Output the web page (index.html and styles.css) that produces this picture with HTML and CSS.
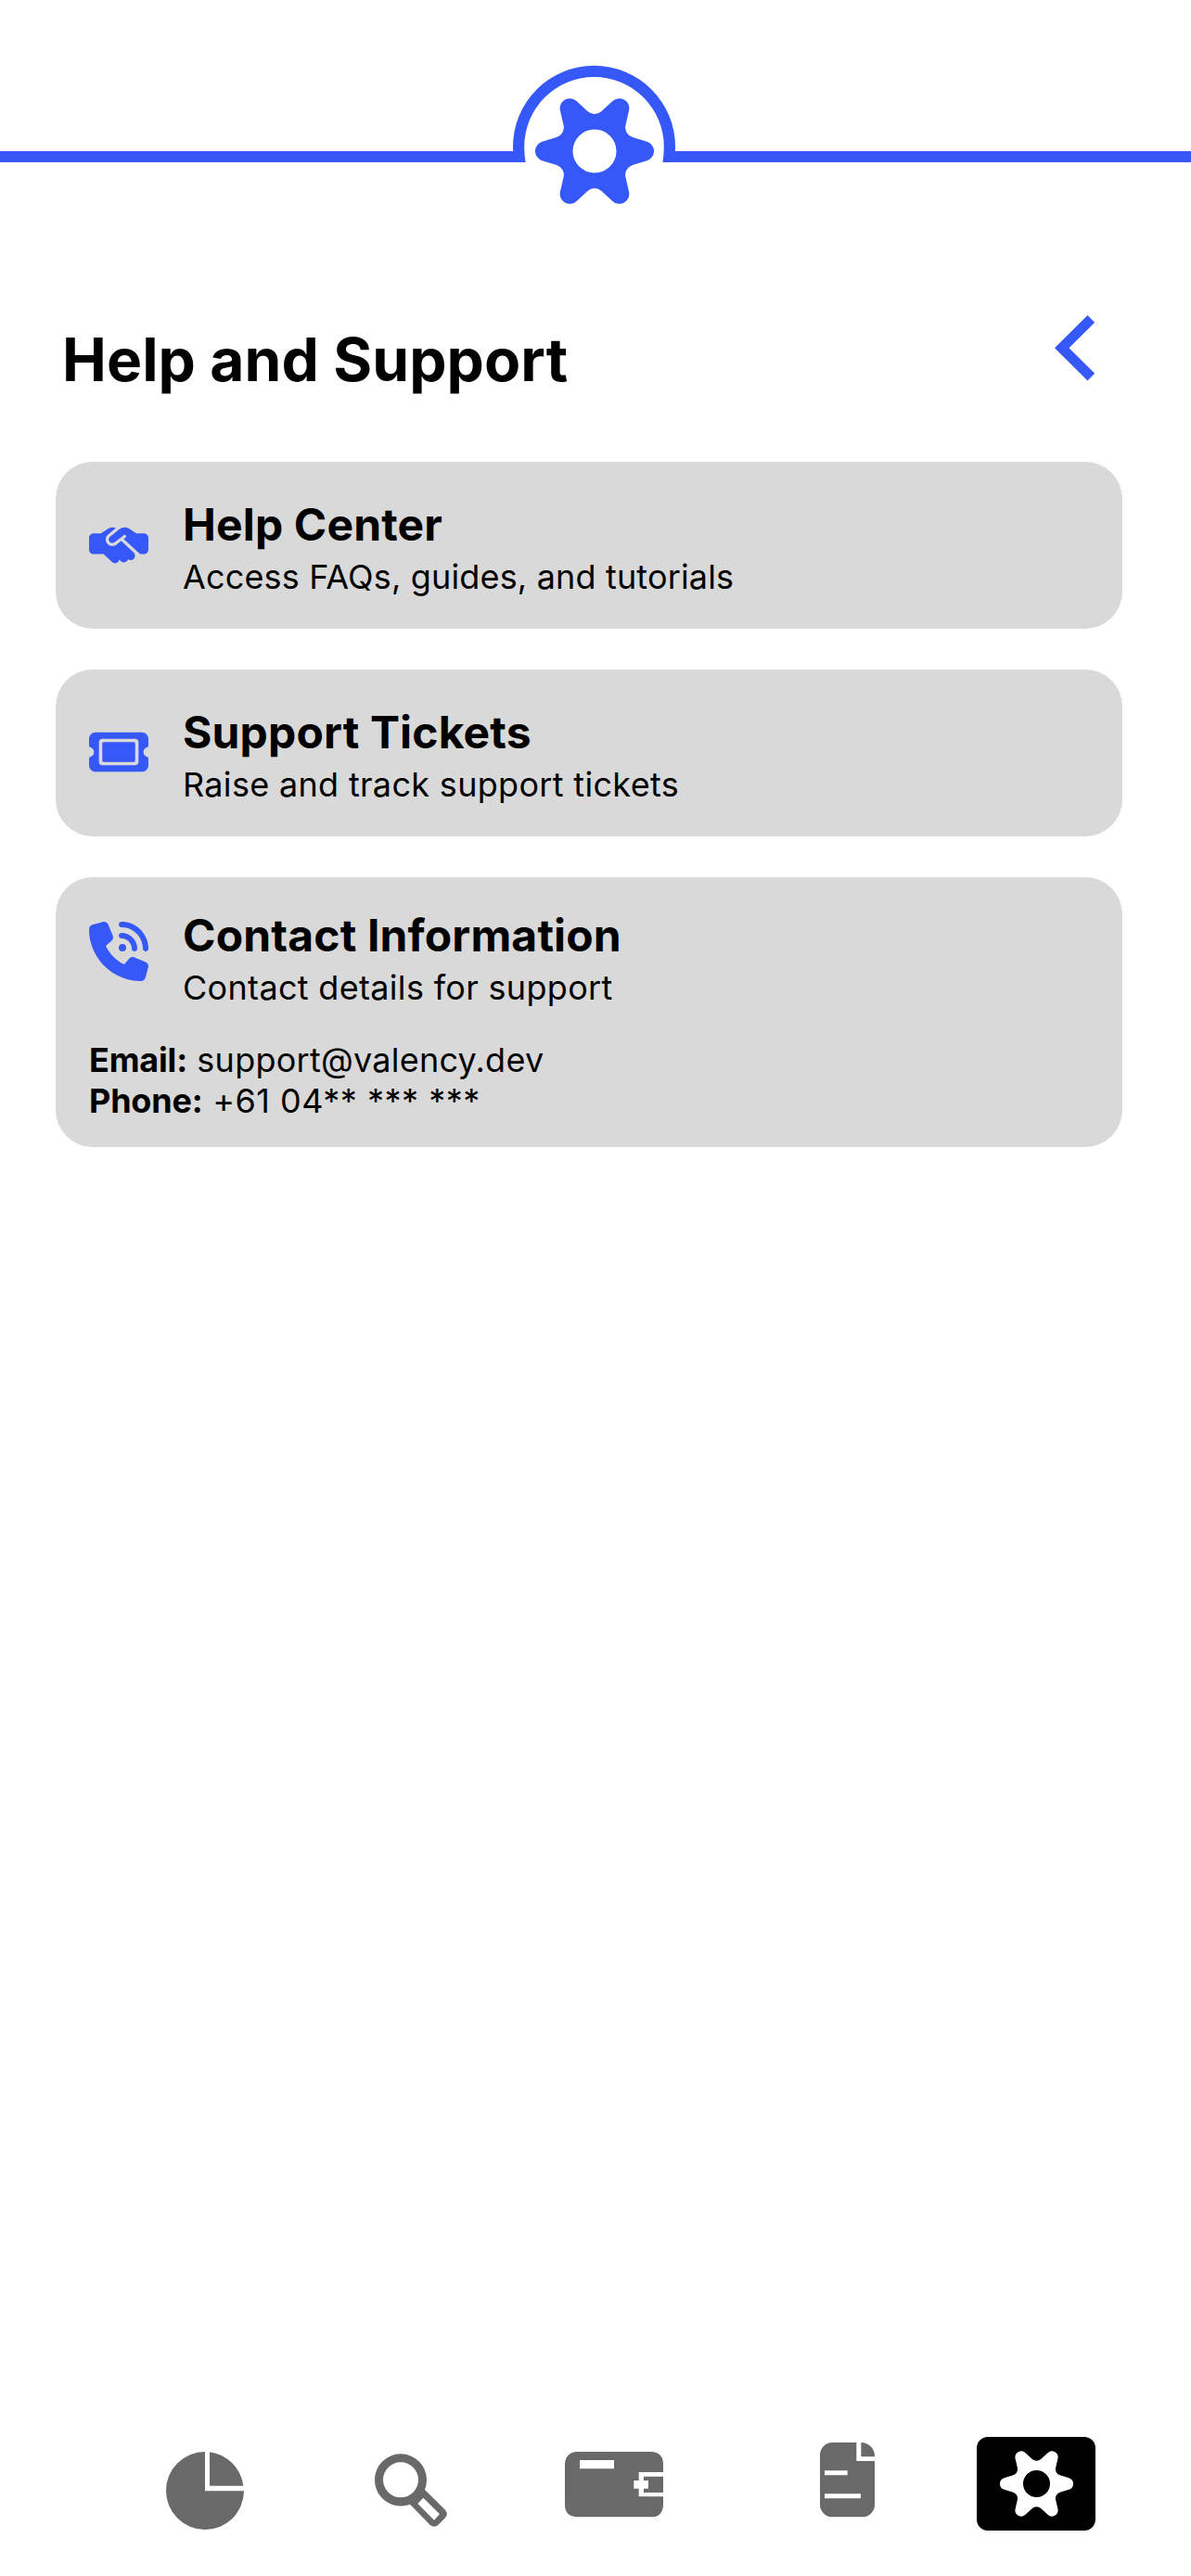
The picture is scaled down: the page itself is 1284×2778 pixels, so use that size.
FILE: index.html
```html
<!DOCTYPE html>
<html lang="en">
<head>
<meta charset="utf-8">
<title>Help and Support</title>
<link rel="stylesheet" href="styles.css">
</head>
<body>
<svg class="defs" width="0" height="0" aria-hidden="true">
  <symbol id="gear" viewBox="-192 -192 384 384">
    <path fill-rule="evenodd" d="M22.5-128.8L58.2-162A32 32 0 0 1 111.2-131.4L100.3-83.9A33 33 0 0 0 122.8-44.9L169.4-30.6A32 32 0 0 1 169.4 30.6L122.8 44.9A33 33 0 0 0 100.3 83.9L111.2 131.4A32 32 0 0 1 58.2 162L22.5 128.8A33 33 0 0 0-22.5 128.8L-58.2 162A32 32 0 0 1-111.2 131.4L-100.3 83.9A33 33 0 0 0-122.8 44.9L-169.4 30.6A32 32 0 0 1-169.4-30.6L-122.8-44.9A33 33 0 0 0-100.3-83.9L-111.2-131.4A32 32 0 0 1-58.2-162L-22.5-128.8A33 33 0 0 0 22.5-128.8ZM70.5 0A70.5 70.5 0 1 0-70.5 0A70.5 70.5 0 1 0 70.5 0Z"/>
  </symbol>
</svg>
<div class="screen">
  <header class="topbar">
    <svg width="1284" height="240" viewBox="0 0 1284 240" aria-hidden="true">
      <clipPath id="arch"><rect width="1284" height="175"/></clipPath>
      <g clip-path="url(#arch)">
        <path fill="#3758f9" d="M0 163H1284V175H0Z"/>
        <circle cx="640.5" cy="158.3" r="87.5" fill="#3758f9"/>
        <path fill="#fff" d="M565.2 158.3a75.3 75.3 0 0 1 150.6 0q0 8.700-1.4 16.700H566.600q-1.400-8-1.400-16.700Z"/>
      </g>
      <use href="#gear" x="577" y="99" width="128" height="128" fill="#3758f9"/>
    </svg>
  </header>

  <main class="content">
    <div class="heading">
      <h1 class="title">Help and Support</h1>
      <a class="back" aria-label="Back"><svg width="44" height="71" viewBox="0 0 44 71"><path d="M35.500 0L43.200 7.700L15.500 35.200L43.200 62.700L35.500 70.400L0 35.200Z"/></svg></a>
    </div>

    <section class="card">
      <div class="card-head">
        <svg class="icon" viewBox="0 0 640 512"><path d="M323.400 85.200l-96.800 78.400c-16.100 13-19.200 36.400-7 53.100c12.900 17.800 38 21.300 55.300 7.800l99.300-77.200c7-5.400 17-4.200 22.500 2.800s4.200 17-2.800 22.500l-20.900 16.200L550.200 352H592c26.500 0 48-21.500 48-48V176c0-26.500-21.500-48-48-48H516h-4-.7l-3.900-2.500L434.800 79c-15.300-9.800-33.200-15-51.400-15c-21.800 0-43 7.500-60 21.200zm22.800 124.400l-51.700 40.200C263 274.300 217.300 268 193.700 235.600c-22.200-30.500-16.600-73.100 12.700-96.800l83.200-67.300c-11.600-4.900-24.100-7.400-36.800-7.400C234 64 215.700 69.600 200 80l-72 48H48c-26.500 0-48 21.500-48 48V304c0 26.500 21.500 48 48 48H156.200l91.400 83.400c19.600 17.900 49.900 16.500 67.800-3.100c5.500-6.100 9.200-13.200 11.100-20.600l17 15.600c19.500 17.900 49.900 16.600 67.800-2.900c4.500-4.900 7.800-10.600 9.900-16.500c19.400 13 45.800 10.300 62.100-7.500c17.900-19.500 16.600-49.900-2.900-67.800l-134.200-123z"/></svg>
        <div class="card-text">
          <h2 class="card-title">Help Center</h2>
          <p class="line line-faq">Access FAQs, guides, and tutorials</p>
        </div>
      </div>
    </section>

    <section class="card">
      <div class="card-head">
        <svg class="icon icon-ticket" viewBox="0 0 576 512"><path d="M64 64C28.700 64 0 92.700 0 128v64c0 8.800 7.400 15.700 15.700 18.600C34.500 217.100 48 235 48 256s-13.500 38.900-32.300 45.400C7.400 304.300 0 311.200 0 320v64c0 35.300 28.700 64 64 64H512c35.300 0 64-28.700 64-64V320c0-8.800-7.400-15.700-15.700-18.600C541.500 294.900 528 277 528 256s13.500-38.900 32.300-45.400c8.300-2.900 15.700-9.800 15.700-18.600V128c0-35.300-28.700-64-64-64H64zm64 112l0 160c0 8.800 7.200 16 16 16H432c8.800 0 16-7.200 16-16V176c0-8.800-7.200-16-16-16H144c-8.800 0-16 7.200-16 16zM96 160c0-17.700 14.300-32 32-32H448c17.700 0 32 14.300 32 32V352c0 17.700-14.300 32-32 32H128c-17.700 0-32-14.300-32-32V160z"/></svg>
        <div class="card-text">
          <h2 class="card-title">Support Tickets</h2>
          <p class="line line-wide">Raise and track support tickets</p>
        </div>
      </div>
    </section>

    <section class="card card-contact">
      <div class="card-head">
        <svg class="icon" viewBox="0 0 512 512"><path d="M280 0C408.100 0 512 103.900 512 232c0 13.300-10.700 24-24 24s-24-10.700-24-24c0-101.600-82.400-184-184-184c-13.300 0-24-10.700-24-24s10.700-24 24-24zm8 192a32 32 0 1 1 0 64 32 32 0 1 1 0-64zm-32-72c0-13.300 10.700-24 24-24c75.100 0 136 60.900 136 136c0 13.300-10.700 24-24 24s-24-10.700-24-24c0-48.600-39.400-88-88-88c-13.300 0-24-10.700-24-24zM117.500 1.400c19.400-5.300 39.700 4.600 47.400 23.200l40 96c6.800 16.300 2.100 35.200-11.600 46.300L144 207.300c33.300 70.400 90.300 127.400 160.700 160.700L345 318.700c11.200-13.700 30-18.400 46.300-11.600l96 40c18.600 7.700 28.500 28 23.200 47.400l-24 88C481.800 499.900 466 512 448 512C200.600 512 0 311.400 0 64C0 46 12.100 30.200 29.500 25.400l88-24z"/></svg>
        <div class="card-text">
          <h2 class="card-title">Contact Information</h2>
          <p class="line line-wide">Contact details for support</p>
        </div>
      </div>
      <div class="details">
        <p class="line line-email"><b>Email:</b> support@valency.dev</p>
        <p class="line line-phone"><b>Phone:</b> +61 04** *** ***</p>
      </div>
    </section>
  </main>

  <nav class="tabs">
    <a class="tab tab-overview" aria-label="Overview"><svg width="84" height="84" viewBox="57 72 252 252"><path d="M183 72A126 126 0 1 0 309 199H183ZM198 73V182H307A126 126 0 0 0 198 73Z"/></svg></a>
    <a class="tab tab-search" aria-label="Search"><svg width="78" height="80" viewBox="732 77 234 240"><path fill-rule="evenodd" d="M732 162A84 84 0 0 1 900 162A84 84 0 0 1 894 194L960 259Q971 272 960 285L937 308Q924 319 911 308L846 241A84 84 0 0 1 732 162ZM759 162A57 57 0 1 0 873 162A57 57 0 1 0 759 162ZM889 220L871 239L924 292L942 273Z"/></svg></a>
    <a class="tab tab-wallet" aria-label="Wallet"><svg width="106" height="71" viewBox="57 101 318 213"><path d="M97 101H335Q375 103 375 141V167H296V194H280V220H296V246H375V274Q373 312 335 312H97Q57 310 57 272V141Q59 103 97 101ZM105 128V156H216V128ZM375 181V233H312V220H327V194H312V181Z" fill-rule="evenodd"/></svg></a>
    <a class="tab tab-reports" aria-label="Reports"><svg width="59" height="81" viewBox="72 71 177 243"><path fill-rule="evenodd" d="M112 71H190V131H249V272A40 40 0 0 1 209 312H112A40 40 0 0 1 72 272V111A40 40 0 0 1 112 71ZM205 71A44 44 0 0 1 249 117H205ZM87 162V177H161V162ZM87 237V252H204V237Z"/></svg></a>
    <a class="tab tab-settings" aria-label="Settings"><svg width="79" height="79"><use href="#gear" width="79" height="79"/></svg></a>
  </nav>
</div>
</body>
</html>
```
FILE: styles.css
```css
* {
  box-sizing: border-box;
  margin: 0;
}

body {
  background: #fff;
  color: #000;
  font-family: Inter, "Liberation Sans", sans-serif;
}

svg {
  display: block;
  flex: none;
}

.defs {
  position: absolute;
}

.screen {
  display: flex;
  flex-direction: column;
  width: 1284px;
  height: 2778px;
}

.topbar {
  height: 240px;
}

.content {
  display: flex;
  flex-direction: column;
  gap: 44px;
  padding: 100px 74px 0 60px;
}

.heading {
  display: flex;
  align-items: flex-start;
  justify-content: space-between;
  height: 114px;
  padding: 0 29px 0 7px;
}

.title {
  padding-top: 9px;
  font-size: 64px;
  font-weight: 700;
  line-height: 78px;
  letter-spacing: 0.1px;
}

.back {
  fill: #3758f9;
}

.card {
  display: flex;
  flex-direction: column;
  justify-content: center;
  height: 180px;
  padding: 0 36px;
  border-radius: 40px;
  background: #d9d9d9;
}

.card-contact {
  justify-content: flex-start;
  height: 291px;
  padding-top: 29px;
}

.card-head {
  display: flex;
  align-items: center;
  gap: 37px;
}

.card-contact .card-head {
  align-items: flex-start;
}

.card-contact .icon {
  margin-top: 19px;
}

.icon {
  width: 64px;
  height: 64px;
  fill: #3758f9;
}

.icon-ticket {
  margin-bottom: 2px;
}

.card-text {
  padding-top: 5px;
}

.card-title {
  font-size: 48px;
  font-weight: 700;
  line-height: 58px;
  letter-spacing: 0.15px;
}

.line {
  font-size: 36px;
  font-weight: 400;
  line-height: 44px;
}

.line b {
  font-weight: 700;
  letter-spacing: -0.2px;
}

.line-faq {
  letter-spacing: 0.16px;
}

.line-wide {
  letter-spacing: 0.32px;
}

.line-email {
  letter-spacing: 0.25px;
}

.line-phone {
  letter-spacing: 0.5px;
}

.card-text .line {
  margin-top: 5px;
}

.details {
  margin-top: 34px;
}

.tabs {
  display: flex;
  align-items: flex-start;
  height: 150px;
  margin-top: auto;
  padding-left: 179px;
}

.tab {
  fill: #696969;
}

.tab-overview {
  margin-top: 16px;
}

.tab-search {
  margin: 18px 0 0 141px;
}

.tab-wallet {
  margin: 16px 0 0 127px;
}

.tab-reports {
  margin: 6px 0 0 169px;
}

.tab-settings {
  display: flex;
  align-items: center;
  justify-content: center;
  width: 128px;
  height: 101px;
  margin-left: 110px;
  border-radius: 12px;
  background: #000;
  fill: #fff;
}
```
